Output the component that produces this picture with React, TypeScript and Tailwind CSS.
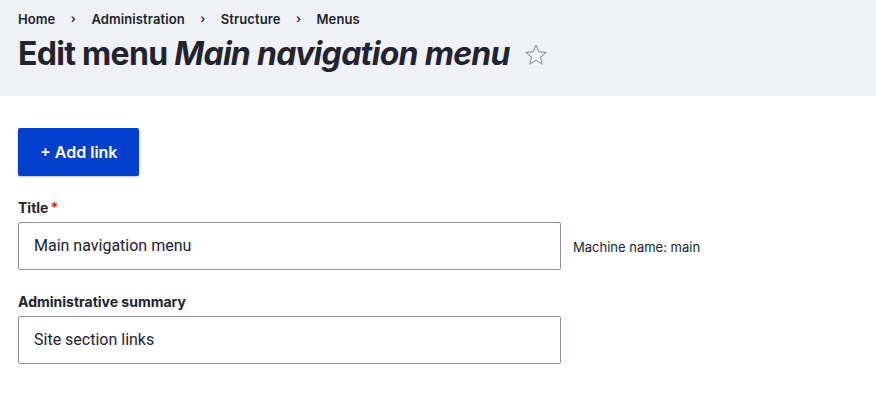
import React from 'react';

const crumbs = ['Home', 'Administration', 'Structure', 'Menus'];

function Star() {
  return (
    <svg width="24" height="24" viewBox="0 0 24 24" className="ml-[14px] mt-[2px]">
      <path
        d="M12 2.2l2.9 6.6 7.1.6-5.4 4.7 1.6 7-6.2-3.7-6.2 3.7 1.6-7L2 9.4l7.1-.6z"
        fill="none"
        stroke="#8e929c"
        strokeWidth="1.1"
        strokeLinejoin="round"
      />
    </svg>
  );
}

export default function App() {
  return (
    <div className="min-h-[397px] bg-white text-[#222330]" style={{ fontFamily: 'Inter, "Noto Sans", sans-serif' }}>
      <div className="bg-[#f0f1f6] h-[96px] px-[18px] pt-[11px]">
        <nav className="flex items-center text-[13px] font-semibold leading-[16px] tracking-[0.1px]">
          {crumbs.map((c, i) => (
            <React.Fragment key={c}>
              {i > 0 && <span className="w-[36px] text-center text-[12px]">›</span>}
              <span>{c}</span>
            </React.Fragment>
          ))}
        </nav>
        <h1 className="flex items-center mt-[7px] text-[32px] font-bold leading-[40px] tracking-[-0.7px]">
          Edit menu&nbsp;<em>Main navigation menu</em>
          <Star />
        </h1>
      </div>

      <div className="px-[18px] pt-[32px]">
        <button className="h-[48px] px-[22px] bg-[#003ecc] text-white text-[16px] font-semibold rounded-[2px] shadow-[0_1px_2px_rgba(0,0,0,0.25)]">
          + Add link
        </button>

        <div className="mt-[23px]">
          <label className="block text-[14px] font-bold leading-[18px] mb-[5px]">
            Title<span className="text-[#dc2323] ml-[2px]">*</span>
          </label>
          <div className="flex items-center">
            <div className="w-[543px] h-[48px] border border-[#8e929c] rounded-[2px] flex items-center px-[15px] text-[16px] font-['Roboto',sans-serif]">
              Main navigation menu
            </div>
            <span className="ml-[12px] text-[13px] mt-[4px]">Machine name: main</span>
          </div>
        </div>

        <div className="mt-[23px]">
          <label className="block text-[14px] font-bold leading-[18px] mb-[5px]">Administrative summary</label>
          <div className="w-[543px] h-[48px] border border-[#8e929c] rounded-[2px] flex items-center px-[15px] text-[16px] font-['Roboto',sans-serif]">
            Site section links
          </div>
        </div>
      </div>
    </div>
  );
}
